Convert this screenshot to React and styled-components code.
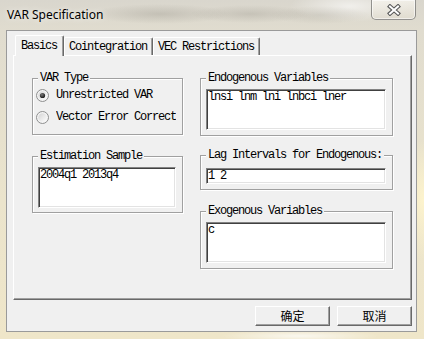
import React from "react";
import styled, { createGlobalStyle } from "styled-components";

const Global = createGlobalStyle`
  html, body { margin: 0; padding: 0; }
  body { width: 424px; height: 339px; overflow: hidden; background: #e6e0cf; }
  * { box-sizing: border-box; }
`;

const mono = `"Liberation Mono", "Cousine", "DejaVu Sans Mono", monospace`;

const Frame = styled.div`
  width: 424px;
  height: 339px;
  padding: 0 7px 7px 6px;
  display: flex;
  flex-direction: column;
  background:
    radial-gradient(ellipse 70px 10px at 160px 14px, rgba(110, 105, 95, 0.22), transparent),
    radial-gradient(ellipse 60px 9px at 250px 14px, rgba(110, 105, 95, 0.2), transparent),
    radial-gradient(ellipse 50px 9px at 320px 15px, rgba(120, 115, 105, 0.16), transparent),
    radial-gradient(ellipse 60px 16px at 350px 6px, rgba(255, 255, 255, 0.6), transparent),
    radial-gradient(ellipse 30px 60px at 424px 200px, rgba(255, 245, 205, 0.9), transparent),
    radial-gradient(ellipse 80px 6px at 300px 336px, rgba(255, 255, 255, 0.7), transparent),
    linear-gradient(180deg, #d9d6cd 0px, #e0dccf 30px, #ebe4cc 200px, #efe6c9 339px);
`;

const TitleBar = styled.div`
  height: 30px;
  display: flex;
  align-items: flex-start;
  flex-shrink: 0;
`;

const Title = styled.div`
  padding: 6px 0 0 1px;
  font-family: "Noto Sans", "Open Sans", sans-serif;
  font-size: 12px;
  line-height: 17px;
  color: #000;
  text-shadow: 0 0 6px rgba(255, 255, 255, 0.9);
`;

const CloseButton = styled.div`
  margin-left: auto;
  margin-right: 1px;
  width: 45px;
  height: 20px;
  border: 1px solid rgba(70, 70, 70, 0.55);
  border-top: none;
  border-radius: 0 0 5px 5px;
  background: linear-gradient(180deg, rgba(250, 248, 242, 0.7), rgba(225, 220, 208, 0.7));
  box-shadow: inset 0 0 0 1px rgba(255, 255, 255, 0.55);
  display: flex;
  align-items: center;
  justify-content: center;
`;

const Client = styled.div`
  flex: 1;
  background: #f0f0f0;
  border: 1px solid #9a9a9a;
  padding: 4px 4px 5px 6px;
  display: flex;
  flex-direction: column;
`;

const TabRow = styled.div`
  height: 20px;
  display: flex;
  align-items: flex-end;
  padding-left: 2px;
`;

const monoText = `
  font-family: ${mono};
  font-size: 12px;
  letter-spacing: -1.2px;
  line-height: 12px;
  color: #000;
  white-space: nowrap;
`;

const Tab = styled.div`
  position: relative;
  z-index: ${(p) => (p.$active ? 1 : 0)};
  height: ${(p) => (p.$active ? 21 : 18)}px;
  margin-bottom: ${(p) => (p.$active ? -1 : 0)}px;
  padding: ${(p) => (p.$active ? "0 6px 0 5px" : "0 5px 0 4px")};
  background: #f0f0f0;
  border-top: 1px solid #fff;
  border-left: 1px solid #fff;
  border-right: 1px solid #696969;
  box-shadow: inset -1px 0 0 #a0a0a0;
  border-radius: 2px 2px 0 0;
  display: flex;
  align-items: center;
  ${monoText}
`;

const Panel = styled.div`
  height: 245px;
  border-top: 1px solid #fff;
  border-left: 1px solid #fff;
  border-right: 1px solid #696969;
  border-bottom: 1px solid #696969;
  box-shadow: inset -1px -1px 0 #a0a0a0;
  padding: 22px 0 0 18px;
  display: flex;
  gap: 17px;
  align-items: flex-start;
`;

const Column = styled.div`
  width: ${(p) => p.$w}px;
  display: flex;
  flex-direction: column;
`;

const Group = styled.div`
  position: relative;
  margin-top: ${(p) => p.$mt || 0}px;
  border: 1px solid #a0a0a0;
  box-shadow: inset 1px 1px 0 #fff, 1px 1px 0 #fff;
  padding: ${(p) => p.$pt ?? 10}px 6px ${(p) => p.$pb ?? 5}px ${(p) => p.$pl ?? 5}px;
`;

const Legend = styled.span`
  position: absolute;
  top: -7px;
  left: 5px;
  padding: 0 2px;
  background: #f0f0f0;
  ${monoText}
`;

const Edit = styled.div`
  height: ${(p) => p.$h}px;
  background: #fff;
  border-style: solid;
  border-width: 1px;
  border-color: #828282 #fff #fff #828282;
  box-shadow: inset 1px 1px 0 #404040, inset -1px -1px 0 #e3e3e3;
  padding: ${(p) => p.$py}px 2px 0 1px;
  overflow: hidden;
  ${monoText}
`;

const RadioRow = styled.div`
  height: 20px;
  display: flex;
  align-items: center;
  gap: 7px;
  & + & { margin-top: 2px; }
`;

const RadioLabel = styled.span`
  width: 120px;
  overflow: hidden;
  ${monoText}
`;

const ButtonRow = styled.div`
  margin-top: 6px;
  display: flex;
  justify-content: flex-end;
  gap: 7px;
`;

const Button = styled.div`
  width: 75px;
  height: 20px;
  background: #f0f0f0;
  border-top: 1px solid #fff;
  border-left: 1px solid #fff;
  border-right: 1px solid #696969;
  border-bottom: 1px solid #696969;
  box-shadow: inset -1px -1px 0 #a0a0a0;
  display: flex;
  align-items: center;
  justify-content: center;
  font-family: "Noto Sans CJK SC", "Noto Sans", sans-serif;
  font-size: 12px;
  line-height: 14px;
  color: #000;
`;

function CloseGlyph() {
  return (
    <svg width="14" height="12" viewBox="0 0 14 12">
      <path d="M3 2.5 L11 9.5 M11 2.5 L3 9.5" stroke="#5a5a5a" strokeWidth="4.2" strokeLinecap="square" />
      <path d="M3 2.5 L11 9.5 M11 2.5 L3 9.5" stroke="#fff" strokeWidth="2" strokeLinecap="square" />
    </svg>
  );
}

function Radio({ checked }) {
  return (
    <svg width="13" height="13" viewBox="0 0 13 13">
      <defs>
        <linearGradient id="radfill" x1="0" y1="0" x2="1" y2="1">
          <stop offset="0" stopColor="#d4d4d4" />
          <stop offset="1" stopColor="#fdfdfd" />
        </linearGradient>
        <radialGradient id="raddot" cx="0.4" cy="0.35" r="0.7">
          <stop offset="0" stopColor="#7a7a7a" />
          <stop offset="1" stopColor="#111" />
        </radialGradient>
      </defs>
      <circle cx="6.5" cy="6.5" r="6" fill="#f4f4f4" stroke="#8e8f8f" />
      <circle cx="6.5" cy="6.5" r="4.3" fill="url(#radfill)" />
      {checked && <circle cx="6.5" cy="6.5" r="2.6" fill="url(#raddot)" />}
    </svg>
  );
}

export default function App() {
  return (
    <>
      <Global />
      <Frame>
        <TitleBar>
          <Title>VAR Specification</Title>
          <CloseButton>
            <CloseGlyph />
          </CloseButton>
        </TitleBar>
        <Client>
          <TabRow>
            <Tab $active>Basics</Tab>
            <Tab>Cointegration</Tab>
            <Tab>VEC Restrictions</Tab>
          </TabRow>
          <Panel>
            <Column $w={151}>
              <Group $pt={6} $pb={7} $pl={3}>
                <Legend>VAR Type</Legend>
                <RadioRow>
                  <Radio checked />
                  <RadioLabel>Unrestricted VAR</RadioLabel>
                </RadioRow>
                <RadioRow>
                  <Radio />
                  <RadioLabel>Vector Error Correct</RadioLabel>
                </RadioRow>
              </Group>
              <Group $mt={21} $pb={4}>
                <Legend>Estimation Sample</Legend>
                <Edit $h={41} $py={1}>2004q1 2013q4</Edit>
              </Group>
            </Column>
            <Column $w={193}>
              <Group>
                <Legend>Endogenous Variables</Legend>
                <Edit $h={41} $py={1}>lnsi lnm lni lnbci lner</Edit>
              </Group>
              <Group $mt={19} $pt={12}>
                <Legend>Lag Intervals for Endogenous:</Legend>
                <Edit $h={16} $py={1}>1 2</Edit>
              </Group>
              <Group $mt={21}>
                <Legend>Exogenous Variables</Legend>
                <Edit $h={41} $py={1}>c</Edit>
              </Group>
            </Column>
          </Panel>
          <ButtonRow>
            <Button>确定</Button>
            <Button>取消</Button>
          </ButtonRow>
        </Client>
      </Frame>
    </>
  );
}
